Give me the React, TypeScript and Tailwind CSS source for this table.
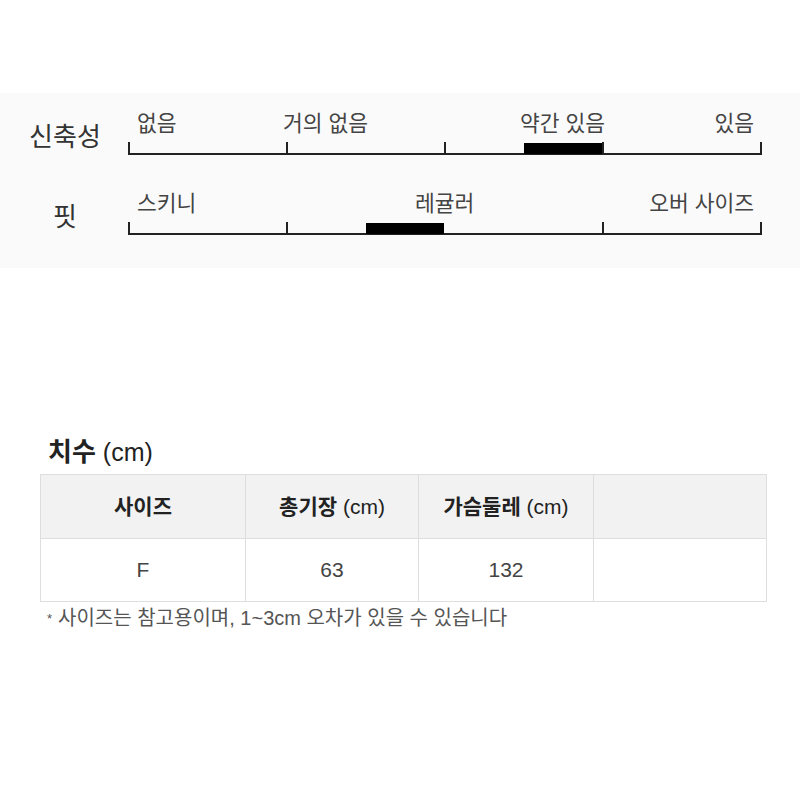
const FONT = '[font-family:"Liberation_Sans","Noto_Sans_CJK_KR",sans-serif]';

type Scale = { ticks: number[]; bar: [number, number] };

// scale is 632px wide, ticks measured from its left edge
function ScaleLine({ ticks, bar }: Scale) {
  return (
    <svg width={634} height={14} className="block">
      <rect x={0} y={11} width={634} height={2} fill="#222" />
      {ticks.map((t) => (
        <rect key={t} x={t} y={0} width={2} height={13} fill="#222" />
      ))}
      <rect x={bar[0]} y={1} width={bar[1] - bar[0]} height={11} fill="#000" />
    </svg>
  );
}

function ScaleRow({ title, children, scale }: { title: string; children: React.ReactNode; scale: Scale }) {
  return (
    <div className="flex items-end">
      <div className="ml-[20px] w-[90px] pb-[6px] text-center text-[26px] leading-none text-[#333]">{title}</div>
      <div className="ml-[18px] flex w-[634px] flex-col gap-[6px]">
        <div className="flex h-[22px] items-center pr-[8px] text-[21.5px] leading-none text-[#444]">{children}</div>
        <ScaleLine {...scale} />
      </div>
    </div>
  );
}

export default function App() {
  return (
    <div className={`h-[800px] w-[800px] overflow-hidden bg-white ${FONT}`}>
      <div className="mt-[93px] flex h-[175px] flex-col gap-[38px] bg-[#fafafa] pt-[21px]">
        <ScaleRow title="신축성" scale={{ ticks: [0, 158, 316, 474, 632], bar: [396, 474] }}>
          <span className="w-[155px] pl-[9px]">없음</span>
          <span className="w-[237px]">거의 없음</span>
          <span>약간 있음</span>
          <span className="ml-auto">있음</span>
        </ScaleRow>
        <ScaleRow title="핏" scale={{ ticks: [0, 158, 474, 632], bar: [238, 316] }}>
          <span className="w-[287px] pl-[9px]">스키니</span>
          <span>레귤러</span>
          <span className="ml-auto">오버 사이즈</span>
        </ScaleRow>
      </div>

      <div className="mt-[171px] px-[40px]">
        <h2 className="flex h-[26px] items-center pl-[8px] leading-none text-[#222]">
          <span className="text-[26px] font-bold">치수</span>
          <span className="ml-[7px] text-[25px]">(cm)</span>
        </h2>
        <table className="mt-[9px] w-[727px] border-collapse text-center text-[21px]">
          <thead>
            <tr className="h-[64px] bg-[#f2f2f2] text-[#222]">
              <th className="w-[205px] border border-[#dedede] font-bold">사이즈</th>
              <th className="w-[173px] border border-[#dedede] font-bold">
                총기장 <span className="font-normal">(cm)</span>
              </th>
              <th className="w-[175px] border border-[#dedede] font-bold">
                가슴둘레 <span className="font-normal">(cm)</span>
              </th>
              <th className="border border-[#dedede]" />
            </tr>
          </thead>
          <tbody>
            <tr className="h-[63px] text-[#444]">
              <td className="border border-[#dedede]">F</td>
              <td className="border border-[#dedede]">63</td>
              <td className="border border-[#dedede]">132</td>
              <td className="border border-[#dedede]" />
            </tr>
          </tbody>
        </table>
        <p className="mt-[6px] flex h-[20px] items-center pl-[7px] text-[20px] leading-none text-[#555]">
          <span className="mr-[6px] text-[13px]">*</span>사이즈는 참고용이며, 1~3cm 오차가 있을 수 있습니다
        </p>
      </div>
    </div>
  );
}
